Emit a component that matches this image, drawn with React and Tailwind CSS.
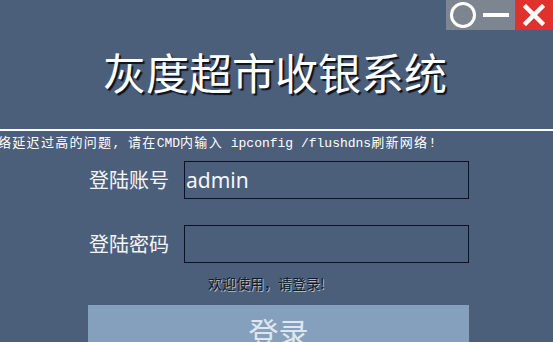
import React, { useState } from 'react';

function App() {
    const [account, setAccount] = useState('admin');
    const [password, setPassword] = useState('');

    return (
        <section className="relative w-[553px] h-[342px] overflow-hidden bg-[#4c5f7a] font-['Noto_Sans_CJK_SC',sans-serif]">
            {/* botones de ventana */}
            <div className="absolute top-0 right-0 flex h-[30px]">
                <div className="flex items-center gap-[7px] bg-[#7d8590] pl-[4px] pr-[6px]">
                    <div className="w-[26px] h-[26px] rounded-full border-[3px] border-white"></div>
                    <div className="w-[26px] h-[4px] bg-white"></div>
                </div>
                <div className="flex items-center justify-center w-[38px] bg-[#e0312c]">
                    <svg width="22" height="22" viewBox="0 0 22 22">
                        <path d="M3 3 L19 19 M19 3 L3 19" stroke="white" strokeWidth="4.5" strokeLinecap="square" />
                    </svg>
                </div>
            </div>

            <div className="flex flex-col">
                <h1 className="pt-[42px] pl-[103px] h-[100px] text-[43px] leading-[58px] text-white [text-shadow:2px_2px_1px_#0b1220]">
                    灰度超市收银系统
                </h1>
                <div className="mt-[29px] h-[2px] w-full bg-white"></div>
                {/* aviso: empieza cortado por el borde izquierdo */}
                <p className="-ml-[2px] mt-[5px] whitespace-nowrap text-[13px] leading-[16px] text-white font-['Liberation_Mono','Noto_Sans_CJK_SC',monospace]">
                    <span className="tracking-[1.3px]">络延迟过高的问题</span>, <span className="tracking-[1.3px]">请在</span>CMD<span className="tracking-[1.3px]">内输入</span> ipconfig /flushdns<span className="tracking-[1.3px]">刷新网络</span>!
                </p>

                <div className="flex items-center mt-[9px] pl-[89px]">
                    <label className="w-[95px] text-[20px] text-[#f4f6f9]">登陆账号</label>
                    <input
                        type="text"
                        value={account}
                        onChange={(e) => setAccount(e.target.value)}
                        className="w-[285px] h-[38px] border border-[#0c1224] bg-transparent px-[1px] text-[21px] text-[#f4f6f9] font-['Noto_Sans',sans-serif] outline-none"
                    />
                </div>
                <div className="flex items-center mt-[26px] pl-[89px]">
                    <label className="w-[95px] text-[20px] text-[#f4f6f9]">登陆密码</label>
                    <input
                        type="password"
                        value={password}
                        onChange={(e) => setPassword(e.target.value)}
                        className="w-[285px] h-[38px] border border-[#0c1224] bg-transparent px-[1px] text-[21px] text-[#f4f6f9] outline-none"
                    />
                </div>
                <p className="mt-[11px] pl-[208px] text-[14px] leading-[18px] text-[#101a2c] [text-shadow:1px_1px_0_#aeb9c8]">
                    欢迎使用，请登录!
                </p>
                <div className="mt-[13px] ml-[88px]">
                    <button className="w-[381px] h-[60px] bg-[#84a0bc] pt-[8px] text-[30px] text-[#dfe6ee] leading-[36px] flex justify-center items-start">
                        登录
                    </button>
                </div>
            </div>
        </section>
    );
}

export default App;
